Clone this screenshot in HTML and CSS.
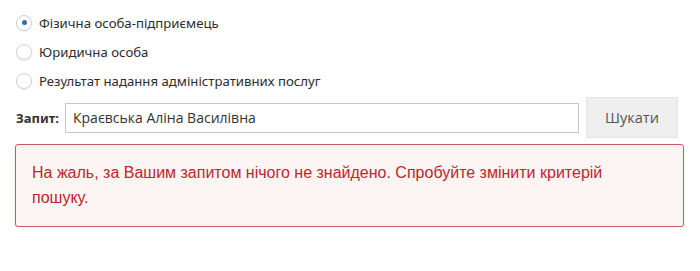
FILE: index.html
```html
<!DOCTYPE html>
<html lang="uk">
<head>
  <meta charset="UTF-8">
  <title>Пошук</title>
  <link rel="stylesheet" href="styles.css">
</head>
<body>
<div class="search">
  <div class="types">
    <label class="type">
      <span class="radio checked"></span>
      <span>Фізична особа-підприємець</span>
    </label>
    <label class="type">
      <span class="radio"></span>
      <span>Юридична особа</span>
    </label>
    <label class="type">
      <span class="radio"></span>
      <span>Результат надання адміністративних послуг</span>
    </label>
  </div>

  <div class="query-row">
    <span class="query-label">Запит:</span>
    <input type="text" class="query-input" value="Краєвська Аліна Василівна">
    <button class="btn-search">Шукати</button>
  </div>

  <div class="alert-error">
    <p>На жаль, за Вашим запитом нічого не знайдено. Спробуйте змінити критерій пошуку.</p>
  </div>
</div>
</body>
</html>
```

FILE: styles.css
```css
body {
  margin: 0;
  padding: 0;
  background: #fff;
  font-family: "Noto Sans", "Open Sans", sans-serif;
  color: #333;
}
.search {
  padding: 8px 16px 0 15px;
}
.types {
  display: flex;
  flex-direction: column;
}
.type {
  display: flex;
  align-items: center;
  height: 29px;
  font-size: 13.2px;
  color: #2d2d2d;
}
.radio {
  width: 14px;
  height: 14px;
  margin-left: 1px;
  margin-right: 7px;
  border: 1px solid #d2d2d2;
  border-radius: 50%;
  background: #fff;
  box-shadow: 0 1px 2px rgba(0, 0, 0, 0.08);
  display: flex;
  align-items: center;
  justify-content: center;
}
.radio.checked::after {
  content: "";
  width: 5px;
  height: 5px;
  border-radius: 50%;
  background: #2c6db5;
}
.query-row {
  display: flex;
  align-items: center;
  height: 41px;
  margin-top: 2px;
}
.query-label {
  width: 49px;
  padding-left: 1px;
  font-weight: bold;
  font-size: 13px;
  color: #333;
}
.query-input {
  box-sizing: border-box;
  width: 514px;
  height: 30px;
  padding: 0 7px;
  border: 1px solid #c6c6c6;
  font-family: "Open Sans", "Noto Sans", sans-serif;
  font-size: 14px;
  color: #333;
}
.btn-search {
  box-sizing: border-box;
  width: 92px;
  height: 41px;
  margin-left: 7px;
  border: 1px solid #e3e3e3;
  background: #efefef;
  color: #555;
  font-family: "Open Sans", "Noto Sans", sans-serif;
  font-size: 14.5px;
}
.alert-error {
  box-sizing: border-box;
  width: 669px;
  margin-top: 6px;
  padding: 15px 40px 16px 16px;
  border: 1px solid #c65a5e;
  border-radius: 3px;
  background: #fdf4f4;
  box-shadow: 0 1px 2px rgba(150, 40, 40, 0.15);
}
.alert-error p {
  margin: 0;
  font-family: "Liberation Sans", Arial, sans-serif;
  font-size: 16px;
  line-height: 25px;
  color: #c0262c;
}
```
